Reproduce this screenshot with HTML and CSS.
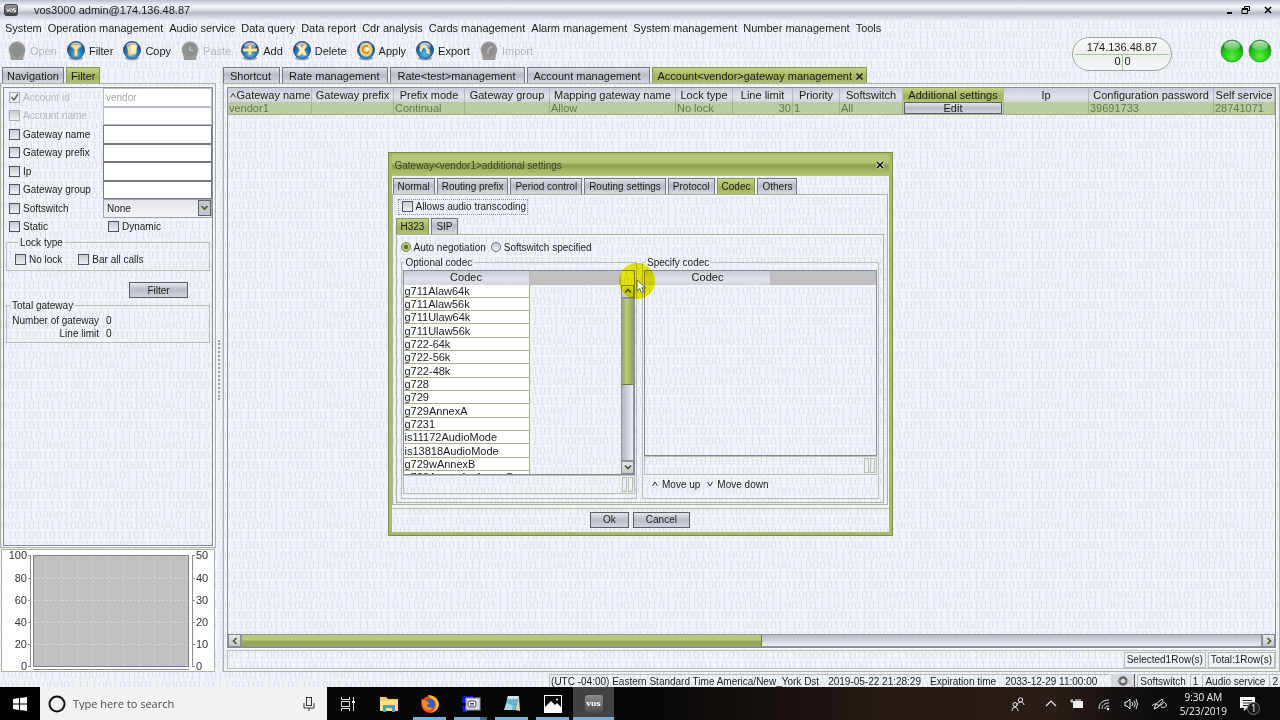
FILE: index.html
```html
<!DOCTYPE html>
<html lang="en">
<head>
    <meta charset="UTF-8">
    <meta name="viewport" content="width=device-width, initial-scale=1.0">
    <title>vos3000 admin@174.136.48.87</title>
    <link rel="stylesheet" href="styles.css">
</head>
<body>
    <!-- shared gradients and toolbar balls -->
    <svg class="defs" width="0" height="0" aria-hidden="true">
        <defs>
            <radialGradient id="blue" cx="50%" cy="75%" r="65%">
                <stop offset="0" stop-color="#58c0f0"/>
                <stop offset="0.6" stop-color="#1c74bc"/>
                <stop offset="1" stop-color="#1d4674"/>
            </radialGradient>
            <radialGradient id="green" cx="50%" cy="75%" r="70%">
                <stop offset="0" stop-color="#5cf03c"/>
                <stop offset="0.6" stop-color="#1cc414"/>
                <stop offset="1" stop-color="#0c7a0c"/>
            </radialGradient>
            <linearGradient id="shine" x1="0" y1="0" x2="0" y2="1">
                <stop offset="0" stop-color="#fff" stop-opacity="0.8"/>
                <stop offset="1" stop-color="#fff" stop-opacity="0.1"/>
            </linearGradient>
            <linearGradient id="vos" x1="0" y1="0" x2="0" y2="1">
                <stop offset="0" stop-color="#9a9a9a"/>
                <stop offset="1" stop-color="#3c3c3c"/>
            </linearGradient>
            <symbol id="ball" viewBox="0 0 18 20">
                <ellipse cx="9" cy="17" rx="7" ry="2.5" fill="#8fa0b4"/>
                <circle cx="9" cy="9" r="8.5" fill="url(#blue)" stroke="#35587e"/>
                <ellipse cx="9" cy="5" rx="6" ry="3.5" fill="url(#shine)"/>
            </symbol>
            <symbol id="ball-off" viewBox="0 0 18 20">
                <path d="M9 .5a8.5 8.5 0 0 1 7 13l-1 5.500H3l-1-5.500a8.500 8.500 0 0 1 7-13z" fill="#999"/>
                <circle cx="9" cy="9" r="6.500" fill="#8e8e8e"/>
            </symbol>
        </defs>
    </svg>

    <div class="app">
        <header class="titlebar">
            <svg class="app-logo" width="14" height="12" viewBox="0 0 14 12"><rect x="0.500" y="0.500" width="13" height="11" rx="2" fill="url(#vos)" stroke="#444"/><path d="M2.500 4.500l1.500 3.500 1.500-3.500M11.500 4.500h-2v1.700h2V8h-2" fill="none" stroke="#eee"/><circle cx="7.300" cy="6.300" r="1.500" fill="none" stroke="#eee"/></svg>
            <span class="app-name">vos3000 admin@174.136.48.87</span>
            <button class="win-btn" aria-label="Minimize"><svg width="10" height="10"><path d="M2 8h5" stroke="#000" stroke-width="2"/></svg></button>
            <button class="win-btn" aria-label="Restore"><svg width="10" height="10"><path d="M3.500 3V1.500h5v4H7M1 4h5.500v4.500H1z" fill="none" stroke="#000"/><path d="M1 4h6" stroke="#000" stroke-width="2"/></svg></button>
            <button class="win-btn close" aria-label="Close"><svg width="10" height="10"><path d="M2 2l6 6M8 2l-6 6" stroke="#000" stroke-width="1.600"/></svg></button>
        </header>

        <nav class="menubar">
            <a href="#">System</a>
            <a href="#">Operation management</a>
            <a href="#">Audio service</a>
            <a href="#">Data query</a>
            <a href="#">Data report</a>
            <a href="#">Cdr analysis</a>
            <a href="#">Cards management</a>
            <a href="#">Alarm management</a>
            <a href="#">System management</a>
            <a href="#">Number management</a>
            <a href="#">Tools</a>
        </nav>

        <div class="toolbar">
            <button disabled><svg width="18" height="20"><use href="#ball-off"/></svg>Open</button>
            <button><svg width="18" height="20"><use href="#ball"/><path d="M4 4h10l-3.500 5v6h-3V9z" fill="#fbe3a0" stroke="#c39a4a" stroke-width="0.500"/></svg>Filter</button>
            <button><svg width="18" height="20"><use href="#ball"/><path d="M4 6l5-2 5 1-1 8-7 2z" fill="#f6d98a"/><path d="M7 4l5-1 2 2-1 8H7z" fill="#fff0c4" stroke="#cda24c" stroke-width="0.500"/></svg>Copy</button>
            <button disabled><svg width="18" height="20"><use href="#ball-off"/><path d="M9 5v4l3 1" fill="none" stroke="#bbb" stroke-width="1.500"/></svg>Paste</button>
            <button><svg width="18" height="20"><use href="#ball"/><path d="M7.500 4h3v3.500H16v3h-5.500V14h-3v-3.500H2v-3h5.500z" fill="#fbe3a0" stroke="#c39a4a" stroke-width="0.500"/></svg>Add</button>
            <button><svg width="18" height="20"><use href="#ball"/><path d="M4 4h3.500L9 6.500 10.500 4H14l-2.500 5 2.500 5.500h-3.500L9 12l-1.500 2.500H4L6.500 9z" fill="#fdeebb" stroke="#c39a4a" stroke-width="0.500"/></svg>Delete</button>
            <button><svg width="18" height="20"><use href="#ball"/><circle cx="9" cy="9" r="6.500" fill="#f3cf7c"/><path d="M11 5.500a3.500 3.500 0 1 0 1 5" fill="none" stroke="#b98428" stroke-width="1.300"/><circle cx="10" cy="8" r="2" fill="#ffefbd"/></svg>Apply</button>
            <button><svg width="18" height="20"><use href="#ball"/><path d="M3.500 10c0-4 2-6.500 4.500-6.500 2 0 3 2 4 4l1.500 1 .5 5-4.500-2 1.200-1C9.500 8 9 6.500 8 6.500S6 8 5.500 11z" fill="#fbe3a0"/></svg>Export</button>
            <button disabled><svg width="18" height="20"><use href="#ball-off"/><path d="M12 5l-4 4v4" fill="none" stroke="#bbb" stroke-width="1.500"/></svg>Import</button>
            <div class="server">
                <span>174.136.48.87</span>
                <span class="counts"><b>0</b><b>0</b></span>
            </div>
            <div class="lamps">
                <svg width="24" height="24"><circle cx="12" cy="12" r="11" fill="url(#green)" stroke="#4f9a48"/><ellipse cx="12" cy="7" rx="8" ry="5" fill="url(#shine)"/></svg>
                <svg width="24" height="24"><circle cx="12" cy="12" r="11" fill="url(#green)" stroke="#4f9a48"/><ellipse cx="12" cy="7" rx="8" ry="5" fill="url(#shine)"/></svg>
            </div>
        </div>

        <main class="workspace">
            <aside class="sidebar">
                <div class="tabs">
                    <button class="tab">Navigation</button>
                    <button class="tab active">Filter</button>
                </div>
                <div class="panel side-panel">
                    <form class="inner filter-form" onsubmit="return false">
                        <div class="fields">
                            <label class="off"><input type="checkbox" checked disabled>Account id</label>
                            <input type="text" aria-label="Account id value" value="vendor" disabled>
                            <label class="off"><input type="checkbox" disabled>Account name</label>
                            <input type="text" aria-label="Account name value" disabled>
                            <label><input type="checkbox">Gateway name</label>
                            <input type="text" aria-label="Gateway name value">
                            <label><input type="checkbox">Gateway prefix</label>
                            <input type="text" aria-label="Gateway prefix value">
                            <label><input type="checkbox">Ip</label>
                            <input type="text" aria-label="Ip value">
                            <label><input type="checkbox">Gateway group</label>
                            <input type="text" aria-label="Gateway group value">
                            <label><input type="checkbox">Softswitch</label>
                            <select aria-label="Softswitch value"><option>None</option></select>
                            <label><input type="checkbox">Static</label>
                            <label class="dynamic"><input type="checkbox">Dynamic</label>
                        </div>
                        <fieldset class="lock-type">
                            <legend>Lock type</legend>
                            <label><input type="checkbox">No lock</label>
                            <label><input type="checkbox">Bar all calls</label>
                        </fieldset>
                        <button class="btn filter-btn">Filter</button>
                        <fieldset class="totals">
                            <legend>Total gateway</legend>
                            <span>Number of gateway</span><span>0</span>
                            <span>Line limit</span><span>0</span>
                        </fieldset>
                    </form>
                </div>
                <div class="chart">
                    <svg width="100%" height="121" viewBox="0 0 212 121">
                        <rect x="31.500" y="5.500" width="155" height="111" fill="#c0c0c0" stroke="#808080"/>
                        <path d="M43.500 6v110M59.500 6v110M75.500 6v110M90.500 6v110M106.500 6v110M121.500 6v110M137.500 6v110M152.500 6v110M168.500 6v110M184.500 6v110M32 28.500h154M32 50.500h154M32 72.500h154M32 94.500h154" stroke="#d4d4d4" stroke-dasharray="2 2" fill="none"/>
                        <path d="M28.500 5v112M26 5.500h2M26 28.500h2M26 50.500h2M26 72.500h2M26 94.500h2M26 116.500h2M190.500 5v112M191 5.500h2M191 28.500h2M191 50.500h2M191 72.500h2M191 94.500h2M191 116.500h2M31 119.500h156" stroke="#8c8c8c" fill="none"/>
                        <path d="M111 116.500h75" stroke="#7a6fc0"/>
                        <g text-anchor="end">
                            <text x="25" y="9">100</text><text x="25" y="32">80</text><text x="25" y="54">60</text>
                            <text x="25" y="76">40</text><text x="25" y="98">20</text><text x="25" y="120">0</text>
                        </g>
                        <g>
                            <text x="194" y="9">50</text><text x="194" y="32">40</text><text x="194" y="54">30</text>
                            <text x="194" y="76">20</text><text x="194" y="98">10</text><text x="194" y="120">0</text>
                        </g>
                    </svg>
                </div>
            </aside>

            <div class="splitter"><i></i></div>

            <section class="content">
                <div class="tabs">
                    <button class="tab wide">Shortcut</button>
                    <button class="tab wide">Rate management</button>
                    <button class="tab wide">Rate&lt;test&gt;management</button>
                    <button class="tab wide">Account management</button>
                    <button class="tab active closable">Account&lt;vendor&gt;gateway management<svg width="9" height="9"><path d="M1.500 1.500l6 6M7.500 1.500l-6 6" stroke="#222" stroke-width="1.500"/></svg></button>
                </div>
                <div class="panel main-panel">
                    <div class="inner grid-box">
                        <table class="gateways">
                            <colgroup>
                                <col class="w84"><col class="w82"><col class="w71"><col class="w85"><col class="w126"><col class="w57"><col class="w60"><col class="w47"><col class="w63"><col class="w101"><col class="w85"><col class="w125"><col>
                            </colgroup>
                            <thead>
                                <tr>
                                    <th><svg width="8" height="7"><path d="M1.500 5.500l2.500-4 2.500 4" fill="none" stroke="#333"/></svg>Gateway name</th>
                                    <th>Gateway prefix</th>
                                    <th>Prefix mode</th>
                                    <th>Gateway group</th>
                                    <th>Mapping gateway name</th>
                                    <th>Lock type</th>
                                    <th>Line limit</th>
                                    <th>Priority</th>
                                    <th>Softswitch</th>
                                    <th class="current">Additional settings</th>
                                    <th>Ip</th>
                                    <th>Configuration password</th>
                                    <th>Self service</th>
                                </tr>
                            </thead>
                            <tbody>
                                <tr>
                                    <td>vendor1</td>
                                    <td></td>
                                    <td>Continual</td>
                                    <td></td>
                                    <td>Allow</td>
                                    <td>No lock</td>
                                    <td class="num">30</td>
                                    <td>1</td>
                                    <td>All</td>
                                    <td><button class="btn edit-btn">Edit</button></td>
                                    <td></td>
                                    <td>39691733</td>
                                    <td>28741071</td>
                                </tr>
                            </tbody>
                        </table>
                        <div class="hscroll">
                            <button class="arrow" aria-label="Scroll left"><svg width="8" height="8"><path d="M5.500 1l-3 3 3 3" fill="none" stroke="#4a5a24" stroke-width="1.600"/></svg></button>
                            <span class="track"><i class="thumb"></i></span>
                            <button class="arrow" aria-label="Scroll right"><svg width="8" height="8"><path d="M2.500 1l3 3-3 3" fill="none" stroke="#4a5a24" stroke-width="1.600"/></svg></button>
                        </div>
                    </div>
                    <div class="row-info">
                        <span>Selected1Row(s)</span>
                        <span>Total:1Row(s)</span>
                    </div>
                </div>
            </section>
        </main>

        <footer class="statusbar">
            <div class="clock">
                <span>(UTC -04:00) Eastern Standard Time America/New_York Dst</span>
                <span>2019-05-22 21:28:29</span>
                <span>Expiration time</span>
                <span>2033-12-29 11:00:00</span>
            </div>
            <button class="sync" aria-label="Refresh"><svg width="12" height="10"><circle cx="6" cy="5" r="3.500" fill="none" stroke="#666" stroke-width="2.500"/><path d="M0 5h4M8 5h4" stroke="#aaa"/></svg></button>
            <span class="cell">Softswitch</span>
            <span class="cell">1</span>
            <span class="cell">Audio service</span>
            <span class="cell">2</span>
        </footer>

        <div class="dialog" role="dialog" aria-labelledby="dlgTitle">
            <div class="dialog-title">
                <span id="dlgTitle">Gateway&lt;vendor1&gt;additional settings</span>
                <button class="win-btn" aria-label="Close dialog"><svg width="10" height="10"><path d="M2 2l6 6M8 2l-6 6" stroke="#fff" stroke-width="3"/><path d="M2 2l6 6M8 2l-6 6" stroke="#000" stroke-width="1.600"/></svg></button>
            </div>
            <div class="dialog-body">
                <div class="tabs">
                    <button class="tab">Normal</button>
                    <button class="tab">Routing prefix</button>
                    <button class="tab">Period control</button>
                    <button class="tab">Routing settings</button>
                    <button class="tab">Protocol</button>
                    <button class="tab active">Codec</button>
                    <button class="tab">Others</button>
                </div>
                <div class="panel codec-panel">
                    <label class="transcoding"><input type="checkbox">Allows audio transcoding</label>
                    <div class="tabs">
                        <button class="tab active">H323</button>
                        <button class="tab">SIP</button>
                    </div>
                    <div class="panel h323-panel">
                        <div class="modes">
                            <label><input type="radio" name="mode" checked>Auto negotiation</label>
                            <label><input type="radio" name="mode">Softswitch specified</label>
                        </div>
                        <div class="codec-lists">
                            <fieldset>
                                <legend>Optional codec</legend>
                                <div class="codec-box optional">
                                    <table class="codecs">
                                        <colgroup><col class="w126"><col></colgroup>
                                        <thead><tr><th>Codec</th><th class="blank"></th></tr></thead>
                                        <tbody>
                                            <tr><td>g711Alaw64k</td></tr>
                                            <tr><td>g711Alaw56k</td></tr>
                                            <tr><td>g711Ulaw64k</td></tr>
                                            <tr><td>g711Ulaw56k</td></tr>
                                            <tr><td>g722-64k</td></tr>
                                            <tr><td>g722-56k</td></tr>
                                            <tr><td>g722-48k</td></tr>
                                            <tr><td>g728</td></tr>
                                            <tr><td>g729</td></tr>
                                            <tr><td>g729AnnexA</td></tr>
                                            <tr><td>g7231</td></tr>
                                            <tr><td>is11172AudioMode</td></tr>
                                            <tr><td>is13818AudioMode</td></tr>
                                            <tr><td>g729wAnnexB</td></tr>
                                            <tr><td>g729AnnexAwAnnexB</td></tr>
                                        </tbody>
                                    </table>
                                    <div class="vscroll">
                                        <span class="corner"></span>
                                        <button class="arrow" aria-label="Scroll up"><svg width="8" height="8"><path d="M1 5.500l3-3 3 3" fill="none" stroke="#4a5a24" stroke-width="1.600"/></svg></button>
                                        <span class="track"><i class="thumb"></i></span>
                                        <button class="arrow" aria-label="Scroll down"><svg width="8" height="8"><path d="M1 2.500l3 3 3-3" fill="none" stroke="#4a5a24" stroke-width="1.600"/></svg></button>
                                    </div>
                                </div>
                                <div class="list-foot"><i></i><i></i></div>
                            </fieldset>
                            <fieldset>
                                <legend>Specify codec</legend>
                                <div class="codec-box specified">
                                    <table class="codecs">
                                        <colgroup><col class="w126"><col></colgroup>
                                        <thead><tr><th>Codec</th><th class="blank"></th></tr></thead>
                                    </table>
                                </div>
                                <div class="list-foot"><i></i><i></i></div>
                                <div class="movers">
                                    <button><svg width="8" height="8"><path d="M1.500 6l2.500-4 2.500 4" fill="none" stroke="#333"/></svg>Move up</button>
                                    <button><svg width="8" height="8"><path d="M1.500 2l2.500 4 2.500-4" fill="none" stroke="#333"/></svg>Move down</button>
                                </div>
                            </fieldset>
                        </div>
                    </div>
                </div>
                <div class="dialog-buttons">
                    <button class="btn">Ok</button>
                    <button class="btn">Cancel</button>
                </div>
            </div>
            <!-- mouse pointer with click highlight -->
            <span class="halo"></span>
            <svg class="pointer" width="12" height="16" viewBox="0 0 12 16"><path d="M1 1v11l2.700-2.500 1.800 4 2-1-1.800-3.700H9.500z" fill="#fff" stroke="#444" stroke-width="0.800"/></svg>
        </div>
    </div>

    <div class="taskbar">
        <button class="start" aria-label="Start"><svg width="14" height="14"><path d="M0 2l6-1v5.600H0zM7 .9L14 0v6.600H7zM0 7.500h6V13l-6-1zM7 7.500h7V14l-7-.9z" fill="#fff"/></svg></button>
        <label class="search">
            <svg width="18" height="18"><circle cx="9" cy="9" r="7.500" fill="none" stroke="#111" stroke-width="2"/></svg>
            <input type="text" placeholder="Type here to search">
            <svg width="12" height="14"><rect x="3.500" y="0.500" width="5" height="8" fill="none" stroke="#333"/><path d="M1 6v5h10V6M6 11v3" fill="none" stroke="#333"/></svg>
        </label>
        <div class="apps">
            <button aria-label="Task view"><svg width="16" height="16"><path d="M1.500 1v2.500h8V1M1.500 15v-2.500h8V15M1.500 5.500h8v5h-8zM13.500 1v14" fill="none" stroke="#ddd"/><path d="M12 6h3" stroke="#fff" stroke-width="2"/></svg></button>
            <button aria-label="File Explorer"><svg width="20" height="18"><path d="M1 2h6l2 2h10v12H1z" fill="#f4cf6a"/><path d="M1 6h18v10H1z" fill="#fbe08d"/><path d="M4 17v-7h12v7h-3v-4H7v4z" fill="#35a4dc"/></svg></button>
            <button class="open" aria-label="Firefox"><svg width="20" height="20"><circle cx="10" cy="10.500" r="8.500" fill="#f0501e"/><path d="M8 1c6 0 11 4 11 10-1 5-5 7-8 8 4-3 7-8 3-13-2-2-5-2-6-5z" fill="#ffc22b"/><circle cx="10" cy="10" r="5" fill="#2d63c8"/><path d="M1.500 5l5 2 3 3-3 1c1 3 4 3 6 2-1 4-7 4-9 0C2 11 1 8 1.500 5z" fill="#ff8a1c"/></svg></button>
            <button class="open grouped" aria-label="Remote tool"><svg width="20" height="18"><path d="M2 1h10v3H6v4H1V5zM1 11h5v6H2z" fill="#1418e0"/><rect x="5" y="3" width="14" height="12" fill="#d9dcec" stroke="#8c90b8"/><rect x="7" y="6" width="8" height="6" rx="2" fill="#fff" stroke="#444"/><path d="M9 8.500h4M9 10h4" stroke="#444"/></svg></button>
            <button class="open" aria-label="Notepad"><svg width="20" height="18"><path d="M6 1h11l-4 14H2z" fill="#6db4cc"/><path d="M6 1h11l-1 3H5z" fill="#cfe9ef"/><path d="M13 15l4-14 1 15z" fill="#d9d2ae"/><path d="M5 8l6 3-1 4H2z" fill="#a6dbe6"/></svg></button>
            <button class="open" aria-label="Photos"><svg width="18" height="18"><rect x="0.500" y="0.500" width="17" height="17" fill="#0b0b0b" stroke="#fff"/><path d="M1 17v-5l6-6 4 4 2-2 4 4v5z" fill="#fff"/><circle cx="13" cy="4.500" r="1" fill="#fff"/></svg></button>
            <button class="open active"><span class="vos-tile">vos</span></button>
        </div>
        <div class="tray">
            <svg width="14" height="14"><circle cx="9.500" cy="3" r="2.200" fill="none" stroke="#eee"/><path d="M6 9c0-5 7-5 7-1" fill="none" stroke="#eee"/><circle cx="4" cy="7.500" r="2" fill="none" stroke="#eee"/><path d="M1 14c0-5 6-5 6 0" fill="none" stroke="#eee"/></svg>
            <svg width="12" height="14"><path d="M1 9l5-5 5 5" fill="none" stroke="#eee" stroke-width="1.200"/></svg>
            <svg width="14" height="14"><rect x="3" y="4" width="10" height="7" fill="#eee"/><path d="M2 2v4M0 4h3M5 3h6" stroke="#eee"/></svg>
            <svg width="14" height="14"><path d="M2 12C2 6 6 3 12 3M5 12c0-4 3-6 7-6M8 12c0-2 1-3 4-3" fill="none" stroke="#ddd"/><circle cx="11" cy="12" r="1.200" fill="#fff"/></svg>
            <svg width="14" height="14"><path d="M1 5h2l3-3v10L3 9H1z" fill="none" stroke="#eee"/><path d="M8 5q1.500 2 0 4M10 3.500q2.500 3.500 0 7M12 2q3 5 0 10" fill="none" stroke="#ddd"/></svg>
            <svg width="16" height="14"><path d="M3 12l2-5 6-5 1 2-5 6zM1 9c3-5 6 1 9-1s3-4 5-1-3 4-5 3" fill="none" stroke="#eee"/></svg>
            <div class="time"><span>9:30 AM</span><span>5/23/2019</span></div>
            <span class="notice"><svg width="15" height="14"><path d="M0 0h15v11H7l-3 3v-3H0z" fill="#fff"/><path d="M3 3.500h9M3 6h9M3 8.500h6" stroke="#222"/></svg><i>1</i></span>
        </div>
    </div>
</body>
</html>
```

FILE: styles.css
```css
:root {
    --olive: #a9bb68;
    --line: #a9b5a0;
    --paper: #eff4fb;
    --digits: url("data:image/svg+xml,%3Csvg xmlns='http://www.w3.org/2000/svg' width='322' height='120'%3E%3Cg font-family='DejaVu Serif, serif' font-size='11' fill='%23dde2e9'%3E%3Ctext y='9'%3E0101101001011010011100101110100101101010110010%3C/text%3E%3Ctext y='19'%3E1100010011100101000010110100011101001011001101%3C/text%3E%3Ctext y='29'%3E0010111101001100010111010001000101101001011100%3C/text%3E%3Ctext y='39'%3E1011100001010110100100011010111100001011100011%3C/text%3E%3Ctext y='49'%3E0001010111000011110100100110001011010001110101%3C/text%3E%3Ctext y='59'%3E1101001010110100011011000010110100111100001010%3C/text%3E%3Ctext y='69'%3E0111010001101110000101101101000011100101011100%3C/text%3E%3Ctext y='79'%3E1000101110010001111010010101110100001011010011%3C/text%3E%3Ctext y='89'%3E0011010000111100101001100010101110010110101101%3C/text%3E%3Ctext y='99'%3E1110001011010100010110101110000101101000010010%3C/text%3E%3Ctext y='109'%3E0100110110001011100001011001110100010111101011%3C/text%3E%3Ctext y='119'%3E1011001001110100101110000110101011000100110100%3C/text%3E%3C/g%3E%3C/svg%3E");
}
* {
    box-sizing: border-box;
}
body {
    margin: 0;
    height: 100vh;
    display: flex;
    flex-direction: column;
    overflow: hidden;
    font-family: "Liberation Sans", Arial, sans-serif;
    font-size: 11px;
    line-height: 13px;
    color: #1c1c1c;
}
button, input, select {
    font: inherit;
    color: inherit;
    margin: 0;
    padding: 0;
    border-radius: 0;
}
button {
    display: flex;
    align-items: center;
    justify-content: center;
    background: none;
    border: 0;
    white-space: nowrap;
}
a {
    color: inherit;
    text-decoration: none;
}
svg {
    display: block;
    flex: none;
}
label {
    display: flex;
    align-items: center;
    gap: 3px;
    white-space: nowrap;
}
.defs {
    position: absolute;
}
.app {
    position: relative;
    flex: 1;
    min-height: 0;
    display: flex;
    flex-direction: column;
    background: var(--paper) var(--digits);
}

/* title, menu and toolbar */
.titlebar {
    height: 20px;
    display: flex;
    align-items: center;
    padding: 0 4px;
    background: linear-gradient(#b9c0cc, #f4f6fa 30%, #d8dce3 50%, #b7bcc7 65%, #e8ecf2);
}
.app-name {
    flex: 1;
    margin-left: 16px;
}
.win-btn {
    width: 16px;
    height: 14px;
}
.win-btn.close {
    margin-left: 6px;
}
.menubar {
    height: 17px;
    display: flex;
    align-items: center;
    gap: 6px;
    padding-left: 5px;
}
.toolbar {
    height: 28px;
    display: flex;
    align-items: center;
    gap: 10px;
    padding: 0 8px;
}
.toolbar button {
    gap: 4px;
}
.toolbar button:disabled {
    color: #b4b8be;
}
.server {
    width: 100px;
    height: 34px;
    margin: 6px 38px 0 auto;
    border: 1px solid #a2a6ac;
    border-radius: 17px;
    background: linear-gradient(#f9fafb, #eceef0 50%, #f5f6f7);
    text-align: center;
    display: flex;
    flex-direction: column;
}
.server > span:first-child {
    padding: 3px 0 0;
    margin: 0 2px;
    border-bottom: 1px solid #a6cf7c;
}
.counts {
    flex: 1;
    display: flex;
    justify-content: center;
}
.counts b {
    font-weight: normal;
    padding: 0 1px 0 2px;
}
.counts b + b {
    border-left: 1px solid #a6cf7c;
}
.lamps {
    display: flex;
    gap: 4px;
}

/* tabs and framed panels */
.workspace {
    flex: 1;
    min-height: 0;
    display: flex;
    padding: 2px 0;
}
.tabs {
    display: flex;
    gap: 2px;
    height: 16px;
}
.tab {
    height: 16px;
    padding: 1px 4px 0;
    border: 1px solid #727780;
    border-bottom: 0;
    background: linear-gradient(#dfe2e7, #b8bcc5 45%, #d5d8de);
}
.tab.wide {
    padding: 1px 8px 0 6px;
}
.tab.active {
    border-color: #87955a;
    background: linear-gradient(#c3d184, #a3b25f 60%, #b2c074);
}
.tab.closable {
    gap: 3px;
    padding: 1px 2px 0 5px;
}
.panel {
    flex: 1;
    min-height: 0;
    border: 1px solid var(--line);
}
.inner {
    border: 1px solid #858b96;
    outline: 1px solid #fbfcfe;
}
.sidebar {
    width: 216px;
    display: flex;
    flex-direction: column;
}
.sidebar .tabs {
    padding-left: 2px;
}
.side-panel {
    padding: 3px 2px 1px;
    display: flex;
}
.filter-form {
    flex: 1;
    padding: 0 0 0 5px;
    font-size: 10px;
}
.fields {
    display: grid;
    grid-template-columns: 94px 1fr;
    grid-auto-rows: 1fr;
    height: 148px;
}
input[type="checkbox"], input[type="radio"] {
    appearance: none;
    width: 11px;
    height: 11px;
    border: 1px solid #4f555e;
    background: linear-gradient(#c6cad0, #eef0f3);
}
input[type="checkbox"]:disabled {
    border-color: #a9adb4;
}
input[type="checkbox"]:checked {
    background: url("data:image/svg+xml,%3Csvg xmlns='http://www.w3.org/2000/svg' width='9' height='9'%3E%3Cpath d='M1.500 4l2.500 3 4-6' fill='none' stroke='%23666' stroke-width='1.600'/%3E%3C/svg%3E") center no-repeat;
}
input[type="radio"] {
    border-radius: 50%;
    width: 10px;
    height: 10px;
    border-color: #6b7179;
}
input[type="radio"]:checked {
    background: radial-gradient(#5c6c2a 30%, #b7c879 45%);
    border-color: #75854a;
}
.off {
    color: #b4b8be;
}
input[type="text"] {
    min-width: 0;
    width: 100%;
    padding: 0 2px;
    border: 1px solid #737983;
    background: #fff;
}
input[type="text"]:disabled {
    color: #a2a6ac;
    border-color: #b9bec6;
}
select {
    appearance: none;
    width: 100%;
    padding: 0 3px;
    border: 1px solid #a0a5ad;
    background: url("data:image/svg+xml,%3Csvg xmlns='http://www.w3.org/2000/svg' width='13' height='16'%3E%3Crect x='.5' y='.5' width='12' height='15' fill='%23c3c7ce' stroke='%235c626b'/%3E%3Cpath d='M3.500 6l3 3 3-3' fill='none' stroke='%234a5a24' stroke-width='1.600'/%3E%3C/svg%3E") right center no-repeat, linear-gradient(#e4e6ea, #f3f4f6);
}
.dynamic {
    padding-left: 5px;
}
fieldset {
    min-width: 0;
    margin: 0;
    padding: 0;
    border: 1px solid #bcbcb8;
}
legend {
    margin-left: 3px;
    padding: 0 2px;
}
.lock-type {
    margin-left: -3px;
    margin-right: 2px;
    height: 35px;
    display: flex;
    gap: 16px;
    padding: 2px 0 0 8px;
}
.lock-type label {
    height: 16px;
}
.btn {
    height: 16px;
    padding: 0 13px;
    border: 1px solid #5a606a;
    background: linear-gradient(#e3e6ea, #b9bdc5 50%, #d2d5db);
}
.filter-btn {
    width: 59px;
    margin: 11px 0 0 120px;
}
.totals {
    margin: 1px 2px 0 -3px;
    height: 44px;
    display: grid;
    grid-template-columns: 92px auto;
    grid-auto-rows: 13px;
    column-gap: 7px;
    padding: 2px 0 0;
    white-space: nowrap;
}
.totals span:nth-of-type(odd) {
    text-align: right;
}
.chart {
    margin: 1px 1px 0;
    border: 1px solid var(--line);
    background: #fff;
}
.chart text {
    fill: #333;
}
.splitter {
    width: 7px;
    display: flex;
    align-items: center;
    justify-content: center;
    border-right: 1px solid #d5dcd6;
}
.splitter i {
    height: 60px;
    border-left: 2px dotted #9aa0a8;
}
.content {
    flex: 1;
    min-width: 0;
    display: flex;
    flex-direction: column;
}
.main-panel {
    display: flex;
    flex-direction: column;
    padding: 3px 3px 2px;
}
.grid-box {
    flex: 1;
    min-height: 0;
    display: flex;
    flex-direction: column;
    justify-content: space-between;
    overflow: hidden;
}
table {
    width: 100%;
    border-collapse: separate;
    border-spacing: 0;
    table-layout: fixed;
}
th {
    height: 14px;
    padding: 0;
    font-weight: normal;
    white-space: nowrap;
    overflow: hidden;
    border-right: 1px solid #b5b9c1;
    background: linear-gradient(#c9ccd4, #e0e2e8 60%, #d2d5dc);
}
th svg {
    display: inline;
}
td {
    height: 13px;
    padding: 0 1px;
    line-height: 12px;
    white-space: nowrap;
}
.gateways td {
    color: #66784a;
    background: #bccba4;
    border-right: 1px solid #a2b383;
    border-bottom: 1px solid #a2b383;
}
.gateways .current {
    background: linear-gradient(#c3d184, #a3b25f 60%, #b2c074);
}
.gateways .num {
    text-align: right;
}
.edit-btn {
    width: 100%;
    height: 12px;
    color: #1c1c1c;
}
.w47 { width: 47px; }
.w57 { width: 57px; }
.w60 { width: 60px; }
.w63 { width: 63px; }
.w71 { width: 71px; }
.w82 { width: 82px; }
.w84 { width: 84px; }
.w85 { width: 85px; }
.w101 { width: 101px; }
.w125 { width: 125px; }
.w126 { width: 126px; }

/* scroll bars */
.hscroll, .vscroll {
    display: flex;
}
.hscroll {
    height: 13px;
}
.vscroll {
    width: 13px;
    flex-direction: column;
}
.arrow {
    width: 13px;
    height: 13px;
    border: 1px solid #868b94;
    background: linear-gradient(#e6e8ec, #c3c7ce);
}
.track {
    flex: 1;
    border: 1px solid #90959e;
    background: linear-gradient(#b5bac4, #eceef2);
}
.vscroll .track {
    background: linear-gradient(90deg, #b0b5bf, #eceef2);
}
.thumb {
    display: block;
    background: linear-gradient(#b9c97a, #bccb7c 40%, #97a45c 60%, #9cab62);
}
.hscroll .thumb {
    width: 51%;
    height: 100%;
    border-right: 1px solid #6f7b45;
}
.vscroll .thumb {
    height: 54%;
    background: linear-gradient(90deg, #97a45c, #bccb7c 40%, #97a45c);
    border-bottom: 1px solid #6f7b45;
}
.corner {
    height: 14px;
}
.row-info {
    display: flex;
    justify-content: flex-end;
    align-items: center;
    gap: 2px;
    height: 19px;
    margin-top: 2px;
    border: 1px solid #b9bfc0;
    font-size: 10px;
}
.row-info span {
    padding: 0 2px;
    border: 1px solid #b9bab2;
    background: #eef1f5;
    line-height: 14px;
}
.statusbar {
    height: 13px;
    display: flex;
    justify-content: flex-end;
    gap: 2px;
    font-size: 10px;
}
.statusbar .clock {
    display: flex;
    gap: 9px;
    padding: 0 12px 0 1px;
    border: 1px solid #b9bab2;
    border-width: 1px 0 0 1px;
}
.sync {
    width: 24px;
    background: #d5d8dd;
    border-right: 1px solid #555;
}
.cell {
    padding: 0 2px;
    border-left: 1px solid #b9bab2;
    border-top: 1px solid #b9bab2;
}

/* additional settings dialog */
.dialog {
    position: absolute;
    inset: 0;
    margin: auto;
    width: 505px;
    height: fit-content;
    padding: 2px 3px 3px;
    border: 1px solid #7e8d4b;
    background: var(--olive);
    font-size: 10px;
}
.dialog-title {
    display: flex;
    align-items: center;
    justify-content: space-between;
    height: 21px;
    padding: 0 1px 0 3px;
    color: #3c4522;
    background: linear-gradient(#b7c77a, #b4c474 35%, #8f9e50 50%, #a5b664 75%, #b6c57a);
}
.dialog-body {
    padding: 2px 0 4px;
    background: var(--paper) var(--digits);
}
.dialog-body > .tabs {
    padding-left: 1px;
}
.codec-panel {
    margin: 0 1px 0 0;
    padding: 4px 3px 1px;
}
.transcoding {
    width: fit-content;
    height: 16px;
    margin: 0 0 3px 2px;
    padding: 0 1px 0 3px;
    border: 1px dotted #8b9099;
}
.h323-panel {
    padding: 4px 4px 3px;
}
.modes {
    display: flex;
    gap: 5px;
    height: 17px;
}
.codec-lists {
    display: grid;
    grid-template-columns: 1fr 1fr;
    gap: 5px;
}
.codec-lists fieldset {
    padding: 1px 1px 4px;
}
.codec-lists legend {
    margin-left: 1px;
}
.codec-box {
    display: flex;
    overflow: hidden;
    border: 1px solid #858b96;
    font-size: 11px;
}
.codec-box.optional {
    height: 205px;
}
.codec-box.specified {
    height: 186px;
    align-items: flex-start;
}
.optional .codecs {
    height: 214px;
}
.codecs td {
    padding: 0 1px;
    background: #fff;
    border-right: 1px solid #a2b383;
    border-bottom: 1px solid #a2b383;
}
.codecs .blank {
    border: 0;
    background: #c0c0c0;
}
.list-foot {
    display: flex;
    justify-content: flex-end;
    gap: 1px;
    height: 19px;
    padding: 1px;
    border: 1px solid #bcbcb0;
}
.list-foot i {
    width: 5px;
    border: 1px solid #bcbcb0;
}
.movers {
    display: flex;
    gap: 6px;
    height: 19px;
    padding-left: 7px;
}
.movers button {
    gap: 3px;
}
.dialog-buttons {
    display: flex;
    justify-content: center;
    gap: 4px;
    margin-top: 3px;
    padding-top: 3px;
    border-top: 1px solid #b6c295;
}
.dialog-buttons .btn {
    padding: 0 12px;
}
.halo {
    position: absolute;
    left: 230px;
    top: 110px;
    width: 36px;
    height: 36px;
    border-radius: 50%;
    background: #f2ee00;
    mix-blend-mode: multiply;
}
.pointer {
    position: absolute;
    left: 247px;
    top: 126px;
}

/* taskbar */
.taskbar {
    height: 33px;
    display: flex;
    background: linear-gradient(90deg, #060606 50%, #241915 68%, #2a1d18 82%, #0c0c0e 90%);
    font-family: "Open Sans", "Noto Sans", sans-serif;
    color: #f0f0f0;
}
.start {
    width: 40px;
    background: #000;
}
.search {
    width: 287px;
    padding: 0 12px 0 8px;
    gap: 5px;
    background: #f2f2f2;
}
.search input[type="text"] {
    flex: 1;
    border: 0;
    background: none;
    font-size: 11px;
}
.search input::placeholder {
    color: #4a4a4a;
    opacity: 1;
}
.apps {
    display: flex;
}
.apps button {
    width: 41px;
    border: 0 solid transparent;
    border-width: 0 4px;
}
.apps .open {
    background: linear-gradient(#76aede, #76aede) bottom / 100% 3px no-repeat padding-box;
}
.apps .grouped {
    background: linear-gradient(90deg, #76aede 80%, #43688c 80%) bottom / 100% 3px no-repeat padding-box;
}
.apps .active {
    border-width: 0;
    background: linear-gradient(#76aede, #76aede) bottom / 100% 3px no-repeat, #424245;
}
.vos-tile {
    width: 18px;
    height: 18px;
    border-radius: 3px;
    background: linear-gradient(#8e8e8e, #4a4a4a);
    font-family: "DejaVu Serif", serif;
    font-weight: bold;
    font-size: 8px;
    line-height: 17px;
    color: #fff;
}
.tray {
    margin-left: auto;
    display: flex;
    align-items: center;
    gap: 13px;
    padding-right: 18px;
}
.tray svg:first-child {
    margin-right: 7px;
}
.time {
    display: flex;
    flex-direction: column;
    align-items: center;
    font-size: 10px;
    line-height: 14px;
}
.notice {
    position: relative;
}
.notice i {
    position: absolute;
    left: 7px;
    top: 5px;
    width: 13px;
    height: 13px;
    border: 1px solid #777;
    border-radius: 50%;
    background: #1a1a1a;
    font-size: 10px;
    font-style: normal;
    line-height: 11px;
    text-align: center;
}
```
